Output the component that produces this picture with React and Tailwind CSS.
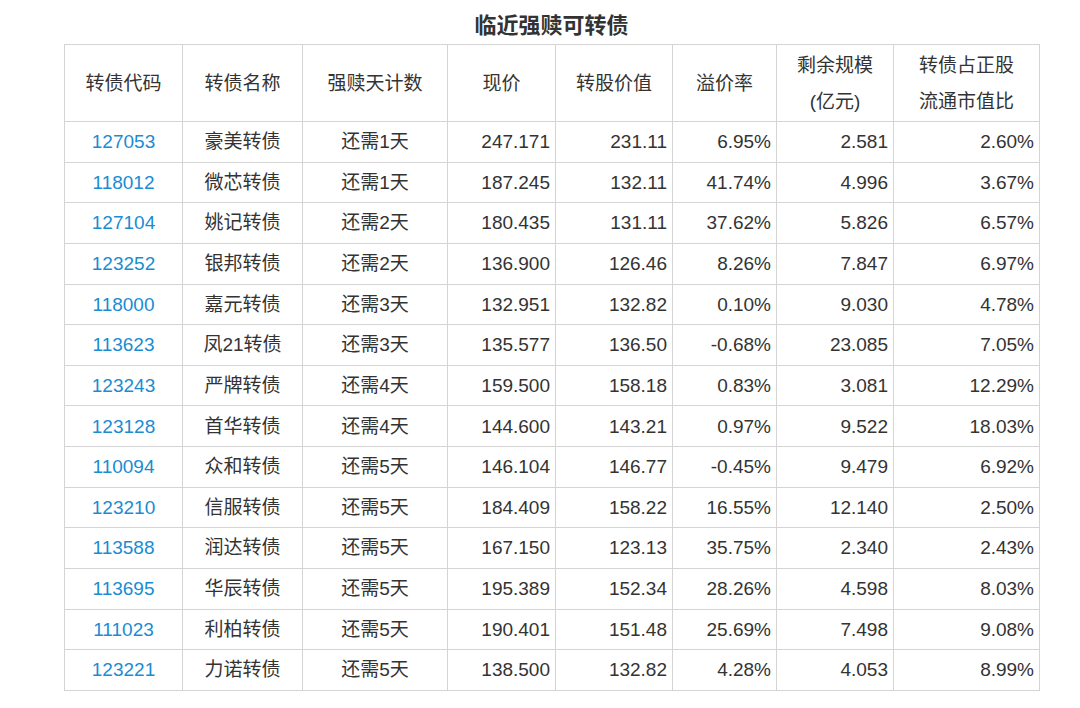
import React from "react";

const rows = [
  ["127053", "豪美转债", "还需1天", "247.171", "231.11", "6.95%", "2.581", "2.60%"],
  ["118012", "微芯转债", "还需1天", "187.245", "132.11", "41.74%", "4.996", "3.67%"],
  ["127104", "姚记转债", "还需2天", "180.435", "131.11", "37.62%", "5.826", "6.57%"],
  ["123252", "银邦转债", "还需2天", "136.900", "126.46", "8.26%", "7.847", "6.97%"],
  ["118000", "嘉元转债", "还需3天", "132.951", "132.82", "0.10%", "9.030", "4.78%"],
  ["113623", "凤21转债", "还需3天", "135.577", "136.50", "-0.68%", "23.085", "7.05%"],
  ["123243", "严牌转债", "还需4天", "159.500", "158.18", "0.83%", "3.081", "12.29%"],
  ["123128", "首华转债", "还需4天", "144.600", "143.21", "0.97%", "9.522", "18.03%"],
  ["110094", "众和转债", "还需5天", "146.104", "146.77", "-0.45%", "9.479", "6.92%"],
  ["123210", "信服转债", "还需5天", "184.409", "158.22", "16.55%", "12.140", "2.50%"],
  ["113588", "润达转债", "还需5天", "167.150", "123.13", "35.75%", "2.340", "2.43%"],
  ["113695", "华辰转债", "还需5天", "195.389", "152.34", "28.26%", "4.598", "8.03%"],
  ["111023", "利柏转债", "还需5天", "190.401", "151.48", "25.69%", "7.498", "9.08%"],
  ["123221", "力诺转债", "还需5天", "138.500", "132.82", "4.28%", "4.053", "8.99%"],
];

const widths = [118, 120, 145, 108, 117, 104, 117, 146];

export default function App() {
  return (
    <div
      className="w-[1080px] h-[708px] bg-white text-[#333]"
      style={{ fontFamily: '"Liberation Sans", "Noto Sans CJK SC", sans-serif' }}
    >
      <div className="w-[975px] ml-[64px] h-[44px] flex items-center justify-center pt-[6px] text-[22px] font-bold">
        临近强赎可转债
      </div>
      <table className="ml-[64px] w-[975px] table-fixed border-collapse text-[19px]">
        <colgroup>
          {widths.map((w, i) => (
            <col key={i} style={{ width: w }} />
          ))}
        </colgroup>
        <thead>
          <tr className="h-[77px]">
            <th className="border border-[#d4d4d4] font-normal pt-[3px]">转债代码</th>
            <th className="border border-[#d4d4d4] font-normal pt-[3px]">转债名称</th>
            <th className="border border-[#d4d4d4] font-normal pt-[3px]">强赎天计数</th>
            <th className="border border-[#d4d4d4] font-normal pt-[3px]">现价</th>
            <th className="border border-[#d4d4d4] font-normal pt-[3px]">转股价值</th>
            <th className="border border-[#d4d4d4] font-normal pt-[3px]">溢价率</th>
            <th className="border border-[#d4d4d4] font-normal leading-[36px] pt-[2px]">
              剩余规模
              <br />
              (亿元)
            </th>
            <th className="border border-[#d4d4d4] font-normal leading-[36px] pt-[2px]">
              转债占正股
              <br />
              流通市值比
            </th>
          </tr>
        </thead>
        <tbody>
          {rows.map((r) => (
            <tr key={r[0]} className="h-[40.65px]">
              <td className="border border-[#d4d4d4] text-center text-[#1a8cd2] pt-[1px]">{r[0]}</td>
              <td className="border border-[#d4d4d4] text-center pt-[1px]">{r[1]}</td>
              <td className="border border-[#d4d4d4] text-center pt-[1px]">{r[2]}</td>
              {r.slice(3).map((v, i) => (
                <td key={i} className="border border-[#d4d4d4] text-right pr-[5px] pt-[1px]">
                  {v}
                </td>
              ))}
            </tr>
          ))}
        </tbody>
      </table>
    </div>
  );
}
